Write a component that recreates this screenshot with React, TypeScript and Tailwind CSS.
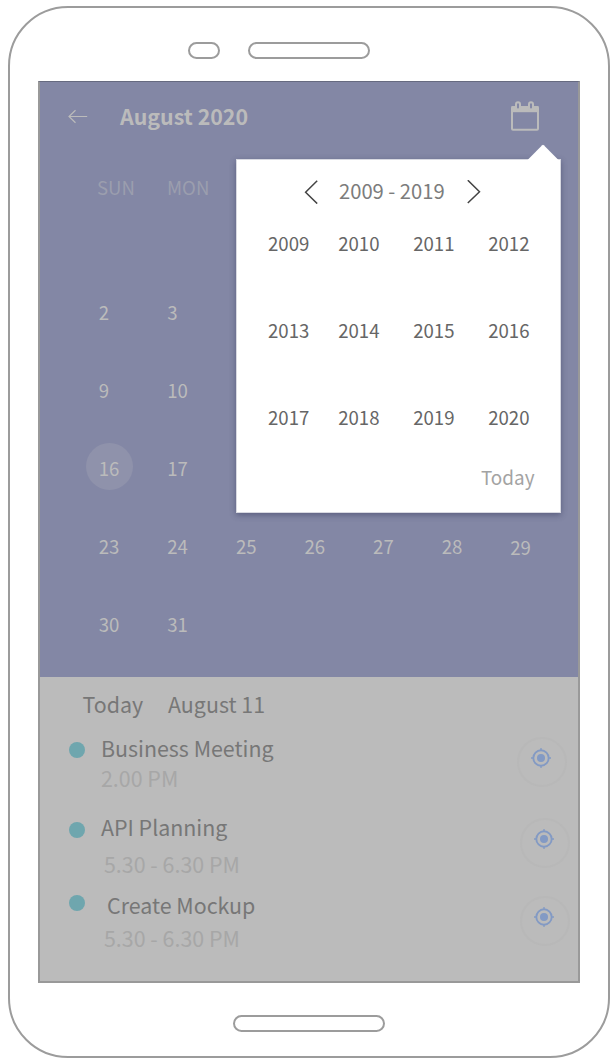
const weeks: number[][] = [
  [2, 3],
  [9, 10],
  [16, 17],
  [23, 24, 25, 26, 27, 28, 29],
  [30, 31],
];

const years = [2009, 2010, 2011, 2012, 2013, 2014, 2015, 2016, 2017, 2018, 2019, 2020];

function ArrowLeft() {
  return (
    <svg className="h-4 w-5" viewBox="0 0 20 16" fill="none" stroke="#bbbbbb" strokeWidth="1.2">
      <path d="M19.2 8.500H1M7.500 2.200L1 8.500l6.500 6.200" />
    </svg>
  );
}

function CalendarIcon() {
  return (
    <svg className="h-[31px] w-[30px]" viewBox="0 0 30 31" fill="none" stroke="#bbbbbb">
      <rect x="2" y="6" width="26" height="22.800" rx="1" strokeWidth="2" />
      <path d="M1.500 5.200H28.500V11.200H1.500Z" fill="#bbbbbb" stroke="none" />
      <rect x="6" y="1.200" width="4" height="7.400" rx="2" fill="#8387a5" strokeWidth="2" />
      <rect x="19" y="1.200" width="4" height="7.400" rx="2" fill="#8387a5" strokeWidth="2" />
    </svg>
  );
}

function Target() {
  return (
    <svg className="size-5" viewBox="0 0 20 20" fill="none" stroke="#839ac4">
      <circle cx="10" cy="10" r="7.700" strokeWidth="1.900" />
      <circle cx="10" cy="10" r="4" fill="#839ac4" stroke="none" />
      <path d="M10 0v3M10 17v3M0 10h3M17 10h3" strokeWidth="1.300" />
    </svg>
  );
}

function Dot() {
  return <span className="block size-4 rounded-full bg-[#6fa6ae]" />;
}

function TargetButton() {
  return (
    <button className="flex size-[50px] justify-center rounded-full border-2 border-[#b8b8b8] pt-[9px] pr-[2px]">
      <Target />
    </button>
  );
}

function YearPicker() {
  return (
    <div className="absolute top-[77px] left-[196px] h-[353.500px] w-[324.500px] border border-[#d8d9e1] bg-white shadow-[0_2px_6px_rgba(40,45,80,0.45)]">
      <svg className="absolute -top-[16px] right-[1px] h-[17px] w-[32px]" viewBox="0 0 32 17">
        <path d="M0 16.500L15.200 1.200q.8-.8 1.600 0L32 16.500V17H0Z" fill="#fff" />
      </svg>
      <div className="flex h-[64px] items-center pl-[67px]">
        <svg className="h-6 w-[14px]" viewBox="0 0 14 24" fill="none" stroke="#444" strokeWidth="1.500">
          <path d="M13.200 .8L1.600 12.300 13.200 23.600" />
        </svg>
        <span className="-mt-[2px] ml-[21px] w-[106px] text-[20.200px] leading-5 whitespace-nowrap text-[#7c7c7c]">2009 - 2019</span>
        <svg className="ml-[22px] h-6 w-[14px]" viewBox="0 0 14 24" fill="none" stroke="#444" strokeWidth="1.500">
          <path d="M.8 .2L12.500 11.700 .8 23" />
        </svg>
      </div>
      <div className="ml-[31px] grid auto-rows-[87px] grid-cols-[70.200px_75px_75px_50px] pt-[9px] text-[18.600px] leading-5 text-[#666]">
        {years.map((year) => (
          <span key={year}>{year}</span>
        ))}
      </div>
      <button className="absolute right-[25px] bottom-[25px] text-[18.900px] leading-5 text-[#a3a3a3]">Today</button>
    </div>
  );
}

export default function App() {
  return (
    <main className="h-[1063px] w-[613px] overflow-hidden bg-white pt-[6px] pl-2 font-['Noto_Sans_CJK_SC',sans-serif]">
      <div className="flex h-[1052px] w-[602px] flex-col rounded-[60px] border-2 border-[#9c9c9c] pl-[28px]">
        <div className="flex h-[73px] gap-[28px] pt-[34px] pl-[150px]">
          <span className="h-[17px] w-[32px] rounded-full border-2 border-[#9c9c9c]" />
          <span className="h-[17px] w-[122px] rounded-full border-2 border-[#9c9c9c]" />
        </div>

        <div className="h-[902px] w-[542px] border-2 border-t-1 border-[#999] border-t-[#666a80] bg-[#bbb]">
          <section className="relative h-[595px] bg-[#8387a5] text-[#bbb]">
            <header className="flex h-[72px] pl-[28px]">
              <div className="mt-[26px] w-[52px]">
                <ArrowLeft />
              </div>
              <h1 className="mt-[22px] w-[390px] text-[21.400px] leading-6 font-bold">August 2020</h1>
              <div className="mt-[19px]">
                <CalendarIcon />
              </div>
            </header>
            <div className="flex h-[148px] pt-[23px] pl-[57px] text-[18.600px] leading-5 text-[#9b9eae]">
              <span className="w-[70px]">SUN</span>
              <span>MON</span>
            </div>
            {weeks.map((week, row) => (
              <div key={row} className="grid h-[78px] grid-cols-[repeat(7,68.600px)] pl-[58.700px] text-[18.600px] leading-5">
                {week.map((day) => (
                  <span key={day} className={day === 29 ? "relative pt-px" : "relative"}>
                    {day === 16 && <i className="absolute -top-[15px] -left-[13px] size-[47px] rounded-full bg-[#8f92ab]" />}
                    <span className="relative">{day}</span>
                  </span>
                ))}
              </div>
            ))}
            <YearPicker />
          </section>

          <section className="flex justify-between text-[21.400px] leading-6 text-[#777]">
            <div className="pl-[29px]">
              <div className="flex pt-[15px] pl-[13.500px]">
                <span className="w-[85.500px]">Today</span>
                <span>August 11</span>
              </div>
              <div className="mt-5 grid grid-cols-[32px_1fr]">
                <div className="pt-[6px]"><Dot /></div>
                <div>
                  <p>Business Meeting</p>
                  <p className="mt-[6px] text-[#a7a7a7]">2.00 PM</p>
                </div>
              </div>
              <div className="mt-[25px] grid grid-cols-[32px_1fr]">
                <div className="pt-[7px]"><Dot /></div>
                <div>
                  <p>API Planning</p>
                  <p className="mt-[13px] pl-[3px] text-[#a7a7a7]">5.30 - 6.30 PM</p>
                </div>
              </div>
              <div className="mt-[17px] grid grid-cols-[32px_1fr]">
                <div className="pt-[2px]"><Dot /></div>
                <div>
                  <p className="pl-[6px]">Create Mockup</p>
                  <p className="mt-[9px] pl-[3px] text-[#a7a7a7]">5.30 - 6.30 PM</p>
                </div>
              </div>
            </div>
            <div className="flex flex-col pt-[60px] pr-[8px]">
              <div className="-ml-[3px]"><TargetButton /></div>
              <div className="mt-[31px]"><TargetButton /></div>
              <div className="mt-[28px]"><TargetButton /></div>
            </div>
          </section>
        </div>

        <div className="pt-[32px] pl-[195px]">
          <span className="block h-[17px] w-[152px] rounded-full border-2 border-[#9c9c9c]" />
        </div>
      </div>
    </main>
  );
}
